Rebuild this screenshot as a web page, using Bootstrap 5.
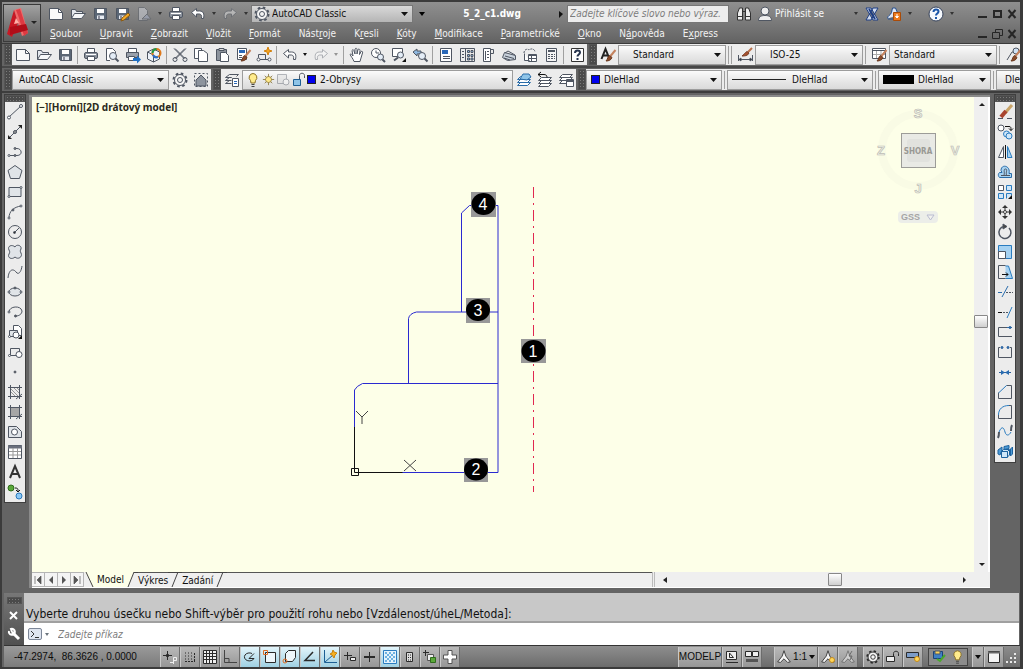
<!DOCTYPE html>
<html lang="cs">
<head>
<meta charset="utf-8">
<meta name="viewport" content="width=device-width, initial-scale=1">
<title>5_2_c1.dwg</title>
<link href="https://cdn.jsdelivr.net/npm/bootstrap@5.3.0/dist/css/bootstrap.min.css" rel="stylesheet">
<style>
:root{--ui:"DejaVu Sans Condensed","DejaVu Sans",sans-serif;--frame:#646464;--strip:#ececec;--paper:#fdffe8}
body{font:10px/14px var(--ui);color:#111;background:var(--frame);border:2px solid #3b3b3b;border-right-width:3px}
button{font:inherit;color:inherit;background:none;border:0;padding:0;flex:none}
select,input{font:inherit;color:inherit;border:0;outline:0;min-width:0}
svg{display:block;flex:none}
.ico{width:20px;height:20px;fill:none;stroke:#4f5662;stroke-width:1}
.slot{width:21px;height:20px;display:flex;align-items:center;justify-content:center}
/* title bar */
.titlebar{height:42px;background:linear-gradient(#8f8f8f,#7a7a7a 50%,#626262);border-bottom:1px solid #3a3a3a;color:#fff;padding-right:1px}
.appbtn{width:38px;height:38px;margin:2px 0 0 1px;background:linear-gradient(#a2a2a2,#7c7c7c 50%,#5c5c5c);border:1px solid #3a3a3a}
.qat{height:22px;margin-top:1px}
.qat .slot{width:22px}
.drop{width:10px;height:20px;display:flex;align-items:center;justify-content:center}
.drop::after{content:"";border:3px solid transparent;border-top:4px solid currentColor;border-bottom:0}
.drop.tiny::after{border-width:3px 2px 0}
.drop.dk{color:#333}
.acct{margin-left:27px}
.linkdrop{margin-right:10px}
.helpdrop{margin-right:17px}
.docname{font-weight:700}
.combo{height:20px;display:flex;align-items:center;background:linear-gradient(#fbfbfb,#e9e9e9 50%,#dadada);border:1px solid #9c9c9c;flex:none;overflow:hidden}
.combo select{appearance:none;flex:1;height:18px;background:url("data:image/svg+xml,%3Csvg xmlns='http://www.w3.org/2000/svg' width='7' height='4'%3E%3Cpath d='M0 0h7L3.500 4z' fill='%23111'/%3E%3C/svg%3E") no-repeat right 4px center;padding:0 12px 0 6px}
.qat .combo{width:162px;height:18px;background:linear-gradient(#d9d9d9,#b5b5b5);color:#111;border-color:#777}
.qat .combo select{height:16px;padding-left:0}
.search{width:162px;height:18px;background:#ededed;border:1px solid #777;padding:0 2px;color:#555;font-style:italic}
.search::placeholder,.cmdinput::placeholder{color:#7c7c7c;opacity:1}
.menurow{gap:18px;padding-left:9px;margin-top:1px;height:18px;line-height:18px}
.menurow a{color:#f2f2f2;text-decoration:none}
.winctl{width:15px;height:18px;display:flex;align-items:center;justify-content:center}
.winctl svg{width:12px;height:12px;stroke:#262626;fill:none;stroke-width:2}
/* docked tool rows */
.toolrow{height:24px;padding-left:2px;border-bottom:2px solid #474747;overflow:hidden}
.toolrow.second{padding-top:1px;height:25px;border-color:#3d3d3d}
.strip{display:flex;align-items:center;background:var(--strip);height:21px;flex:none}
.grip{width:8px;height:21px;flex:none;background:#4a4a4a radial-gradient(#7a7a7a 1px,transparent 1px) 0 0/3px 3px;border:1px solid #555}
.strip+.grip{margin-left:2px}
.grip.h{width:auto;height:7px}
.sep{width:1px;height:18px;background:#a0a0a0;margin:0 2px;flex:none}
.sep+.sep{margin-left:0}
.pale{opacity:.4}
.w-ws{width:157px}.w-layer{width:271px;padding-left:3px}.w-text{width:108px}.w-color{width:136px}.w-ltype{width:146px}.w-lw{width:113px}
.w-text select{padding-left:14px}
.swatch{width:9px;height:9px;background:#00e;border:1px solid #222;flex:none}
/* docked columns */
.work{padding:0 4px 0 2px;min-height:0}
.dock{width:22px;background:var(--strip);border:1px solid #3f3f3f;margin-top:1px}
.dock .slot{width:20px;height:20px}
.view{border-left:3px solid #8a8a8a;border-top:2px solid #8a8a8a;margin:2px 0 0 3px;min-width:0}
.paper{background:var(--paper)}
.vlabel{font:bold 10px/14px "Noto Sans",sans-serif;color:#2a2a20;left:4px;top:3px}
.cube{right:14px;top:10px;width:84px}
.ucsbtn{right:36px;top:114px;width:40px;height:12px;border-radius:4px;background:#eceee9;color:#a5a5a5;font:bold 9px/12px "Liberation Sans",sans-serif}
.vbar{width:16px;background:#efefef;border-right:2px solid #fff}
.thumb{width:14px;height:13px;border:1px solid #888;border-radius:1px;background:linear-gradient(#fff,#cfcfcf);flex:none}
.g205{flex:205}.g231{flex:231}.g158{flex:158}.g117{flex:117}
.tabs{height:16px;background:#efefef;border-bottom:1px solid #fff}
.tabs button{height:15px;line-height:16px}
.pg{width:13px;border:1px solid #b5b5b5;border-left:0;background:#f4f4f4;display:flex;align-items:center;justify-content:center}
.topline{border-top:1px solid #555}
.ltabs{background:var(--paper)}
.hbar{width:338px;padding:0 22px 0 6px;border-left:3px double #bbb}
/* command line */
.cmd{margin:5px 1px 0 2px;height:52px}
.cmdside{width:20px;background:linear-gradient(#777,#505050)}
.cmdlog{height:30px;background:#c8c8c8;border-bottom:2px solid #a0a0a0;font-size:12px;line-height:16px;padding:13px 0 0 2px;color:#111}
.cmdline{height:22px;background:#fff}
.cmdinput{background:none;font-style:italic;height:20px;padding:0 6px}
.prompt{width:14px;height:12px;background:#dfe5ef;border:1px solid #7d8798;border-radius:2px}
/* status bar */
.status{height:22px;border-top:1px solid #333;background:linear-gradient(#8e8e8e,#6c6c6c);margin:0 0 0 2px;font:10px/14px "Liberation Sans",sans-serif;color:#0c0c0c}
.coords{width:156px;height:21px;padding:4px 0 0 10px;background:linear-gradient(#9a9a9a,#7b7b7b)}
.stb{width:20px;height:20px;display:flex;align-items:center;justify-content:center;background:linear-gradient(#b9b9b9,#969696);border-left:1px solid #c9c9c9;border-right:1px solid #6c6c6c}
.stb.on{background:linear-gradient(#e3f5fb,#9fd0e2)}
.stb.thin{width:12px}
.stb .ico{width:18px;height:18px;stroke:#2a2a2a}
.gap5{width:5px;flex:none}
.gap12{width:12px;flex:none}
.tray{width:40px;border:1px solid #444;background:#8c8c8c;height:18px;margin-right:4px}
.tray .ico{width:19px}
</style>
<script src="https://cdn.jsdelivr.net/npm/bootstrap@5.3.0/dist/js/bootstrap.bundle.min.js"></script>
</head>
<body class="vh-100 d-flex flex-column overflow-hidden m-0">

<svg width="0" height="0" class="position-absolute" aria-hidden="true">
  <symbol id="new" viewBox="0 0 20 20"><path d="M3.500 4.500h9l4 4v7h-13z" fill="#fafafa"/><path d="M12.500 4.500v4h4"/></symbol>
  <symbol id="open" viewBox="0 0 20 20"><path d="M3.500 14.500v-9h4l1 2h6v2" fill="#e4e8ee"/><path d="M3.500 14.500l3-5h11l-4 5z" fill="#f6f8fa"/></symbol>
  <symbol id="save" viewBox="0 0 20 20"><path d="M4.500 4.500h12v11h-11l-1-1z" fill="#5b6776"/><path d="M7 5h7v4H7z" fill="#fff" stroke="none"/><path d="M7 11.500h7V15H7z" fill="#e6ebf2" stroke="none"/><path d="M9 12v3" stroke="#334"/></symbol>
  <symbol id="print" viewBox="0 0 20 20"><path d="M6.500 8v-4.500h7V8" fill="#fff"/><rect x="3.500" y="7.500" width="13" height="6" rx="1.500" fill="#8d949e"/><path d="M6.500 11.500h7v4h-7z" fill="#fff"/><path d="M5 9.500h10" stroke="#fff"/></symbol>
  <symbol id="undo" viewBox="0 0 20 20"><path d="M3.500 8.500l5-4v2.500h3c4 0 5 3 4 7.500h-2c.5-3-.5-4.500-2-4.500h-3v3z" fill="#fff"/></symbol>
  <symbol id="redo" viewBox="0 0 20 20"><path d="M16.500 8.500l-5-4v2.500h-3c-4 0-5 3-4 7.500h2c-.5-3 .5-4.500 2-4.500h3v3z" fill="#fff"/></symbol>
  <symbol id="gear" viewBox="0 0 20 20"><circle cx="10" cy="10" r="6.500" stroke-width="2" stroke-dasharray="2.600 2.500"/><circle cx="10" cy="10" r="5.500" fill="#f4f4f4"/><circle cx="10" cy="10" r="2.500"/></symbol>
  <symbol id="brush" viewBox="0 0 20 20"><path d="M17.500 5l-5 6" stroke="#c4825e" stroke-width="2"/><path d="M8 16c2 0 5-.5 6-3.500l-2.500-2c-2 1-1.500 3.500-3.500 5.500z" fill="#8a4a2a" stroke="#6a3a20"/></symbol>
  <symbol id="layers" viewBox="0 0 20 20"><path d="M3.500 15.500l3-3h10l-3 3zM3.500 12.500l3-3h10l-3 3zM3.500 9.500l3-3h10l-3 3z" fill="#fff"/></symbol>
  <symbol id="sun" viewBox="0 0 20 20"><path d="M10 2.500v15M2.500 10h15M5 5l10 10M15 5L5 15" stroke="#7d6a2e"/><circle cx="10" cy="10" r="4" fill="#ffe98a" stroke="#8a7430"/></symbol>
  <symbol id="bulb" viewBox="0 0 20 20"><path d="M10 3.500a4 4 0 0 1 2.500 7l-.5 2.500h-4l-.5-2.500a4 4 0 0 1 2.500-7z" fill="#ffec8c" stroke="#8d7226"/><path d="M8.500 14.500h3M8.500 16.500h3" stroke="#444"/></symbol>
  <symbol id="scale" viewBox="0 0 20 20"><path d="M10 3l2 6 5 6.500-3 .5-4-4-4 4-3-.5L8 9z" fill="#f5f5f5" stroke="#333"/></symbol>
  <symbol id="wclose" viewBox="0 0 12 12"><path d="M2.500 2l7 8M9.500 2l-7 8"/></symbol>
  <symbol id="wmin" viewBox="0 0 12 12"><path d="M2 9h9"/></symbol>
</svg>

<header class="titlebar d-flex flex-shrink-0">
  <button class="appbtn d-flex align-items-center" aria-label="AutoCAD">
    <svg width="36" height="36" viewBox="0 0 36 36"><path d="M10 5l7-2 7 25-6 3z" fill="#f26a6a"/><path d="M10 5L3 29l5 3 6-14z" fill="#c81824"/><path d="M12 5l3 8 5 18 4-3-8-24z" fill="#dd3a42"/><path d="M6 22l16-3 2 6-18 5z" fill="#b00d18"/><path d="M12 13l-2 6 5-1z" fill="#ffb0a8"/><path d="M27 16h6l-3 3z" fill="#222"/></svg>
  </button>
  <div class="flex-grow-1 d-flex flex-column">
    <div class="qat d-flex align-items-center ps-1">
      <button class="slot" aria-label="Nový"><svg class="ico"><use href="#new"/></svg></button>
      <button class="slot" aria-label="Otevřít"><svg class="ico"><use href="#open"/></svg></button>
      <button class="slot" aria-label="Uložit"><svg class="ico"><use href="#save"/></svg></button>
      <button class="slot" aria-label="Uložit jako"><svg class="ico"><use href="#save"/><path d="M9 17l1-3 6-5 2 2-6 5z" fill="#f4a824" stroke="#8a5a12"/></svg></button>
      <button class="slot pale" aria-label="Přenést"><svg class="ico"><path d="M4.500 3.500h6l3 3v10h-9z" fill="#e8ecf6"/><path d="M8 15l5-5 4 5z" fill="#b9c6e6"/></svg></button>
      <button class="drop dk tiny" aria-label="Další"></button>
      <button class="slot" aria-label="Tisk"><svg class="ico"><use href="#print"/></svg></button>
      <button class="slot" aria-label="Zpět"><svg class="ico"><use href="#undo"/></svg></button>
      <button class="drop dk tiny" aria-label="Historie zpět"></button>
      <button class="slot pale" aria-label="Znovu"><svg class="ico"><use href="#redo"/></svg></button>
      <button class="drop dk tiny" aria-label="Historie znovu"></button>
      <label class="combo"><svg class="ico"><use href="#gear"/></svg><select aria-label="Pracovní prostor"><option>AutoCAD Classic</option></select></label>
      <button class="drop text-black mx-1" aria-label="Přizpůsobit panel"></button>
      <div class="docname flex-grow-1 text-center">5_2_c1.dwg</div>
      <svg width="14" height="10" viewBox="0 0 14 10"><path d="M6 2l4 3-4 4z" fill="#111"/></svg>
      <input class="search flex-shrink-0" type="text" placeholder="Zadejte klíčové slovo nebo výraz." aria-label="Hledat">
      <button class="slot ms-1" aria-label="Najít"><svg class="ico"><path d="M3.500 9l2-5h3v12h-5zM11.500 4h3l2 5v7h-5z" fill="#eee" stroke="#333"/><path d="M8.500 7.500h3M4 12.500h4M12 12.500h4" stroke="#333"/></svg></button>
      <button class="d-flex align-items-center text-light"><svg class="ico"><circle cx="10" cy="7" r="4" fill="#eee"/><path d="M3.500 16.500c0-4 3-5 6.500-5s6.500 1 6.500 5z" fill="#eee"/></svg>Přihlásit se</button>
      <button class="drop dk tiny acct" aria-label="Účet"></button>
      <button class="slot" aria-label="Exchange"><svg class="ico"><path d="M4 4h5l7 12h-5zM16 4h-5L4 16h5z" fill="#cfd9ec" stroke="#1f3f85"/><path d="M7 5l6 10" stroke="#1f3f85" stroke-width="2"/></svg></button>
      <button class="slot" aria-label="Propojit"><svg class="ico"><path d="M3.500 14.500c0-3 3-3 4-6l1-4.500h3l3 7M4 15h6" fill="#dce6f6" stroke="#28508e"/><path d="M9.500 8.500h7v8h-7z" fill="#ee7a1c" stroke="#a94b08"/><path d="M13 10v3M11.500 12.500h3L13 14z" stroke="#fff" fill="#fff"/></svg></button>
      <button class="drop dk tiny linkdrop" aria-label="Nabídka propojení"></button>
      <button class="slot" aria-label="Nápověda"><svg class="ico"><circle cx="10" cy="10" r="7" fill="#f5f8fc" stroke="#37435b"/><path d="M7.500 8c0-3.500 5-3 5-.5 0 2-2.500 2-2.500 4M10 13v2" stroke="#1c56a8" stroke-width="2"/></svg></button>
      <button class="drop dk tiny helpdrop" aria-label="Nabídka nápovědy"></button>
      <button class="winctl" aria-label="Minimalizovat"><svg><use href="#wmin"/></svg></button>
      <button class="winctl" aria-label="Maximalizovat"><svg><path d="M3 3h7v6H3z"/></svg></button>
      <button class="winctl" aria-label="Zavřít"><svg><use href="#wclose"/></svg></button>
    </div>
    <nav class="menurow d-flex align-items-center">
      <a href="#"><u>S</u>oubor</a><a href="#"><u>U</u>pravit</a><a href="#"><u>Z</u>obrazit</a><a href="#"><u>V</u>ložit</a><a href="#"><u>F</u>ormát</a><a href="#">Nást<u>r</u>oje</a><a href="#">K<u>r</u>esli</a><a href="#"><u>K</u>óty</a><a href="#"><u>M</u>odifikace</a><a href="#"><u>P</u>arametrické</a><a href="#"><u>O</u>kno</a><a href="#">N<u>á</u>pověda</a><a href="#">E<u>x</u>press</a>
      <div class="d-flex ms-auto">
        <button class="winctl" aria-label="Minimalizovat výkres"><svg><use href="#wmin"/></svg></button>
        <button class="winctl" aria-label="Obnovit výkres"><svg><path d="M4.500 4V1.500h7v6H9M1.500 4.500h7v6h-7z" stroke-width="1"/></svg></button>
        <button class="winctl" aria-label="Zavřít výkres"><svg><use href="#wclose"/></svg></button>
      </div>
    </nav>
  </div>
</header>

<div class="toolrow d-flex flex-shrink-0">
  <div class="grip"></div>
  <div class="strip">
    <button class="slot" aria-label="Nový"><svg class="ico"><use href="#new"/></svg></button>
    <button class="slot" aria-label="Otevřít"><svg class="ico"><use href="#open"/></svg></button>
    <button class="slot" aria-label="Uložit"><svg class="ico"><use href="#save"/></svg></button>
    <span class="sep"></span>
    <button class="slot" aria-label="Tisk"><svg class="ico"><use href="#print"/></svg></button>
    <button class="slot" aria-label="Náhled"><svg class="ico"><path d="M8 15.500H4.500v-12h6l3 3V8" fill="#fff"/><circle cx="11" cy="11" r="3.500" fill="#e4edf7"/><path d="M13.500 13.500l3 3" stroke-width="2"/></svg></button>
    <button class="slot" aria-label="Publikovat"><svg class="ico"><path d="M5.500 7.500v-4h8v4" fill="#fff"/><path d="M3.500 7.500h12v5h-12z" fill="#9aa1ab"/><path d="M5.500 11.500h6v4h-6z" fill="#fff"/><path d="M10 13h4v-2.500l4 4-4 4V16h-4z" fill="#1f6fc4" stroke="none"/></svg></button>
    <button class="slot" aria-label="3DDWF"><svg class="ico"><path d="M3.500 7l6-3 6 3v7l-6 3-6-3z" fill="#eef3fa"/><path d="M3.500 7l6 3v7"/><circle cx="12.500" cy="8" r="4" stroke="#e07a1c" stroke-width="2"/><path d="M12.500 4a4 4 0 0 0-4 4" stroke="#1f9a4a" stroke-width="2"/><path d="M9 10a4 4 0 0 0 5 2" stroke="#2a6fd0" stroke-width="2"/></svg></button>
    <span class="sep"></span>
    <button class="slot" aria-label="Vyjmout"><svg class="ico"><path d="M4 3.500l10 10M16 3.500l-10 10M5 3.500l10 10M15 3.500l-10 10"/><circle cx="5" cy="14.500" r="2"/><circle cx="15" cy="14.500" r="2"/></svg></button>
    <button class="slot" aria-label="Kopírovat"><svg class="ico"><path d="M3.500 3.500h7v10h-7z" fill="#fff"/><path d="M7.500 5.500h5l4 3v8h-9z" fill="#fff"/></svg></button>
    <button class="slot" aria-label="Vložit"><svg class="ico"><path d="M4.500 4.500h10v11h-10z" fill="#8c939c"/><path d="M7 3.500h5v2H7z" fill="#ddd"/><path d="M8.500 7.500h5l3 3v6h-8z" fill="#fff"/></svg></button>
    <button class="slot" aria-label="Kopírovat vlastnosti"><svg class="ico"><path d="M4.500 3.500h9v11h-9z" fill="#fff"/><path d="M6 5h6v3H6z" fill="#2a68b8" stroke="none"/><path d="M6 10.500h3M6 12.500h3"/><use href="#brush"/></svg></button>
    <button class="slot" aria-label="Editor bloků"><svg class="ico"><path d="M4.500 12.500v-3h7v5h-7zM3 14.500h3M11 14.500h4"/><circle cx="4.500" cy="14.500" r="1.500" fill="#fff"/><circle cx="15.500" cy="14.500" r="1.500" fill="#fff"/><path d="M14 2l1 3 3 1-3 1-1 3-1-3-3-1 3-1z" fill="#f5a520" stroke="#d4830e"/></svg></button>
    <span class="sep"></span>
    <button class="slot" aria-label="Zpět"><svg class="ico"><use href="#undo"/></svg></button>
    <button class="drop tiny" aria-label="Historie zpět"></button>
    <button class="slot pale" aria-label="Znovu"><svg class="ico"><use href="#redo"/></svg></button>
    <button class="drop tiny pale" aria-label="Historie znovu"></button>
    <span class="sep"></span>
    <button class="slot" aria-label="Posun"><svg class="ico"><path d="M7 16.500c-1-3-3-5-4-7 1-1 2 0 3 1.500L5 5.500c1-1.500 2-.5 2 .5l1 3v-5c1-1.500 2-.5 2 .5V9l1-4.500c1-1 2 0 2 1l-.5 4 1.500-3c1-.5 2 0 1.500 1.500L14 13l-1 3.500z" fill="#fff"/></svg></button>
    <button class="slot" aria-label="Zoom dynamický"><svg class="ico"><circle cx="8" cy="8" r="4.500" fill="#fff"/><path d="M8 5.500V8h3"/><circle cx="12.500" cy="12" r="3" fill="#e4edf7"/><path d="M14.500 14.500l2.500 2.500" stroke-width="2"/></svg></button>
    <button class="slot" aria-label="Zoom okno"><svg class="ico"><path d="M3.500 3.500h10v8h-10z" fill="#fff"/><circle cx="11.500" cy="10" r="3" fill="#e4edf7"/><path d="M9 12.500l-4 3" stroke-width="2"/><path d="M17 13v4h-4z" fill="#111" stroke="none"/></svg></button>
    <button class="slot" aria-label="Zoom předchozí"><svg class="ico"><path d="M3 7l4-3v2h4v3H7v2z" fill="#8fb8e0"/><circle cx="12" cy="11" r="3.500" fill="#e4edf7"/><path d="M14.500 13.500l3 3" stroke-width="2"/></svg></button>
    <span class="sep"></span>
    <button class="slot" aria-label="Vlastnosti"><svg class="ico"><path d="M4.500 3.500h11v13h-11z" fill="#fff"/><path d="M6 5h6v4H6z" fill="#2a68b8" stroke="none"/><path d="M7 11.500h7M7 13.500h7"/></svg></button>
    <button class="slot" aria-label="DesignCenter"><svg class="ico"><path d="M3.500 3.500h14v13h-14zM8.500 4v12"/><path d="M5 6.500h2M5 9.500h2M5 12.500h2"/><path d="M10.500 5.500h2v2h-2zM14 5.500h2v2h-2zM10.500 9.500h2v2h-2zM14 9.500h2v2h-2zM10.500 13h2v2h-2zM14 13h2v2h-2z" fill="#8fb8e0"/></svg></button>
    <button class="slot" aria-label="Palety nástrojů"><svg class="ico"><path d="M5.500 3.500h7v13h-7z" fill="#fff"/><path d="M12.500 4.500h3v4h-3M7.500 6v9"/><path d="M9 6.500h2M9 9.500h2M9 12.500h2"/></svg></button>
    <button class="slot" aria-label="Sady listů"><svg class="ico"><path d="M3.500 12.500l2-5 11 3v4l-8 1z" fill="#c9d2dc"/><path d="M6 8l3-2 7 4M6 11l9 2.500M5 13l6 2"/></svg></button>
    <button class="slot" aria-label="Značky"><svg class="ico"><path d="M4 8c0-3 3-5 5-3 2-2 6-1 6 2" stroke-dasharray="2 1"/><path d="M4.500 8.500v7h5M8.500 9.500h8v7h-8z" fill="#fff"/><path d="M9 10.500h7M11.500 11v5M9 13.500h7"/></svg></button>
    <button class="slot" aria-label="Kalkulačka"><svg class="ico"><path d="M5.500 3.500h10v13h-10z" fill="#f5f5f5"/><path d="M7 6h7" stroke-width="2"/><path d="M7 9.500h7M7 11.500h7M7 13.500h7" stroke-dasharray="2 1"/></svg></button>
    <span class="sep"></span>
    <button class="slot" aria-label="Nápověda"><svg class="ico"><path d="M4.500 3.500h12v13h-12z" fill="#fff" stroke="#333"/><path d="M8 8c0-3.500 5-3 5-.5 0 2-2.500 2-2.500 4M10.500 13v2" stroke="#27344e" stroke-width="2"/></svg></button>
  </div>
  <div class="grip"></div>
  <div class="strip flex-grow-1">
    <button class="slot" aria-label="Styl textu"><svg class="ico"><path d="M3.500 14l4-10 4 10M5 10.500h5" stroke="#222" stroke-width="2"/><use href="#brush"/></svg></button>
    <div class="combo w-text"><select aria-label="Styl textu"><option>Standard</option></select></div>
    <span class="sep"></span><span class="sep"></span>
    <button class="slot" aria-label="Kótovací styl"><svg class="ico"><path d="M3.500 10v6M17.500 10v6M4 14.500h13"/><path d="M6 13v3l-2-1.500zM15 13v3l2-1.500z" fill="#222"/><path d="M17 3l-4 4" stroke="#b9714c" stroke-width="2"/><path d="M7 11c2 0 6 0 7-3l-2-1.500c-2 1-3 3-5 4.500z" fill="#a8502e" stroke="#7a4028"/></svg></button>
    <div class="combo w-text"><select aria-label="Kótovací styl"><option>ISO-25</option></select></div>
    <span class="sep"></span>
    <button class="slot" aria-label="Styl tabulky"><svg class="ico"><path d="M3.500 3.500h13v10h-13z" fill="#fff"/><path d="M3.500 5.500h13"/><path d="M7.500 6v7M12 6v7M4 9.500h12" stroke="#aaa"/><use href="#brush"/></svg></button>
    <div class="combo w-text"><select class="ps-1" aria-label="Styl tabulky"><option>Standard</option></select></div>
    <span class="sep"></span>
    <button class="slot" aria-label="Styl odkazu"><svg class="ico"><path d="M4 15l5-8h3"/><circle cx="13" cy="6" r="3" fill="#cfe2f5"/><use href="#brush"/></svg></button>
  </div>
</div>

<div class="toolrow second d-flex flex-shrink-0">
  <div class="grip"></div>
  <div class="strip">
    <div class="combo w-ws"><select aria-label="Pracovní prostor"><option>AutoCAD Classic</option></select></div>
    <button class="slot" aria-label="Nastavení prostoru"><svg class="ico"><use href="#gear"/></svg></button>
    <button class="slot" aria-label="Můj prostor"><svg class="ico"><path d="M3.500 3.500h13v13h-13z" stroke-dasharray="2 2"/><path d="M5 10l5-5 5 5v6H5z" fill="#8d949e"/></svg></button>
  </div>
  <div class="grip"></div>
  <div class="strip">
    <button class="slot" aria-label="Správce vrstev"><svg class="ico"><path d="M3.500 7.500l4-3h9l-2 2M3.500 10.500l4-3h2M3.500 13.500l4-3M3.500 7.500h6M3.500 10.500h6M3.500 13.500h6"/><path d="M10.500 8.500h6v8h-6z" fill="#fff"/><path d="M12 11.500h3M12 13.500h3" stroke="#2a68b8"/></svg></button>
    <label class="combo w-layer">
      <svg class="ico" style="width:15px"><use href="#bulb" x="-3" width="20" height="20"/></svg>
      <svg class="ico" style="width:15px"><g transform="translate(0 2) scale(.75)"><use href="#sun" width="20" height="20"/></g></svg>
      <svg class="ico pale" style="width:15px"><path d="M1.500 4.500h9v9h-9z" fill="#ddd"/><circle cx="10" cy="12" r="3" fill="#fff"/></svg>
      <svg class="ico" style="width:16px"><path d="M2.500 9.500h7v6h-7z" fill="#8ec4e8" stroke="#1d5f94"/><path d="M8.500 9V5.500c0-3 5-3 5 0V8"/></svg>
      <span class="swatch"></span><select class="ps-1" aria-label="Vrstva"><option>2-Obrysy</option></select>
    </label>
    <button class="slot" aria-label="Vrstva objektu aktuální"><svg class="ico"><g stroke="#2a6ca8"><use href="#layers"/><path d="M6 9l3-5h6l2 3-4 3z" fill="#8ec4e8"/></g></svg></button>
    <button class="slot" aria-label="Předchozí vrstva"><svg class="ico"><use href="#layers" y="1"/><path d="M3 4.500h6c2 0 3 1 3 3M6 2L3 4.500 6 7" stroke="#111"/></svg></button>
    <button class="slot" aria-label="Stavy vrstev"><svg class="ico"><use href="#layers" y="-2"/><path d="M10.500 9.500h7v7h-7z" fill="#fff"/><path d="M11 11h6" stroke-width="2"/></svg></button>
  </div>
  <div class="grip"></div>
  <div class="strip flex-grow-1">
    <label class="combo w-color ps-1"><span class="swatch"></span><select class="ps-1" aria-label="Barva"><option>DleHlad</option></select></label>
    <span class="sep"></span>
    <label class="combo w-ltype ps-1"><svg width="54" height="2"><path d="M0 0h54v1H0z" fill="#222"/></svg><select aria-label="Typ čáry"><option>DleHlad</option></select></label>
    <span class="sep"></span>
    <label class="combo w-lw ps-1"><svg width="31" height="9"><path d="M0 0h31v9H0z"/></svg><select class="ps-1" aria-label="Tloušťka čáry"><option>DleHlad</option></select></label>
    <span class="sep"></span>
    <div class="combo w-text"><select class="ps-2" aria-label="Styl vykreslení"><option>DleBarvy</option></select></div>
  </div>
</div>

<main class="work d-flex flex-grow-1 overflow-hidden">
  <div class="dock align-self-start flex-shrink-0">
    <div class="grip h"></div>
    <button class="slot" aria-label="Úsečka"><svg class="ico"><path d="M4 15L16 4"/><circle cx="4" cy="15.500" r="1.500" fill="#fff"/><circle cx="16" cy="4" r="1.500" fill="#fff"/></svg></button>
    <button class="slot" aria-label="Přímka"><svg class="ico"><path d="M4 16L16 4"/><path d="M3 17v-4l4 4zM17 3v4l-4-4z" fill="#222" stroke="none"/><circle cx="10" cy="10" r="1.500" fill="#999"/></svg></button>
    <button class="slot" aria-label="Křivka"><svg class="ico"><path d="M4 13.500h8c6 0 5-7 0-7h-2"/><circle cx="4" cy="13.500" r="1" fill="#fff"/><circle cx="10" cy="13.500" r="1" fill="#888"/><circle cx="10" cy="6.500" r="1" fill="#888"/></svg></button>
    <button class="slot" aria-label="Polygon"><svg class="ico"><path d="M10 3.500l7 5-2.500 8h-9L3 8.500z" fill="#e0e4e8"/></svg></button>
    <button class="slot" aria-label="Obdélník"><svg class="ico"><path d="M4 5.500h12v9H4z" fill="#e0e4e8"/><circle cx="4" cy="14.500" r="1" fill="#fff"/><circle cx="16" cy="5.500" r="1" fill="#fff"/></svg></button>
    <button class="slot" aria-label="Oblouk"><svg class="ico"><path d="M4 16c0-7 5-11 12-12"/><circle cx="4" cy="16" r="1" fill="#fff"/><circle cx="8" cy="8" r="1" fill="#777"/><circle cx="16" cy="4" r="1" fill="#fff"/></svg></button>
    <button class="slot" aria-label="Kružnice"><svg class="ico"><circle cx="10" cy="10" r="6.500"/><path d="M10 10l4-4"/><circle cx="9.500" cy="10.500" r="1" fill="#333"/></svg></button>
    <button class="slot" aria-label="Revizní obláček"><svg class="ico"><path d="M10 5c1-3 7-2 6 2-1 2-1 2 0 4 2 4-3 7-6 4-3 3-8 1-6-3 1-2 1-2 0-4-2-4 3-6 6-3z" fill="#e0e4e8"/></svg></button>
    <button class="slot" aria-label="Spline"><svg class="ico"><path d="M3 16c1-10 6-9 8-6s5 1 6-6"/></svg></button>
    <button class="slot" aria-label="Elipsa"><svg class="ico"><ellipse cx="10" cy="10" rx="6" ry="4" fill="#e0e4e8"/><circle cx="10" cy="6" r="1" fill="#777"/><circle cx="4" cy="10" r="1" fill="#fff"/><circle cx="16" cy="10" r="1" fill="#fff"/></svg></button>
    <button class="slot" aria-label="Eliptický oblouk"><svg class="ico"><path d="M4 10c0-6 12-7 13-1 0 3-3 5-6 5"/><circle cx="4" cy="10" r="1" fill="#fff"/><circle cx="10.500" cy="14" r="1" fill="#555"/></svg></button>
    <button class="slot" aria-label="Vložit blok"><svg class="ico"><path d="M8.500 8V3.500h5l3 3v7H12" fill="#fff"/><path d="M4.500 14.500v-6h8v6z" fill="#e0e4e8"/><circle cx="11" cy="13" r="3" fill="#fff"/><circle cx="4.500" cy="14.500" r="1" fill="#fff"/><path d="M17 13v4h-4z" fill="#111" stroke="none"/></svg></button>
    <button class="slot" aria-label="Vytvořit blok"><svg class="ico"><path d="M5.500 13V6.500h9V11M6 13.500h5"/><circle cx="14" cy="12.500" r="3" fill="#fff"/><circle cx="4.500" cy="13.500" r="1" fill="#fff"/></svg></button>
    <button class="slot" aria-label="Bod"><svg class="ico"><circle cx="10" cy="10" r="1" fill="#666"/></svg></button>
    <button class="slot" aria-label="Šrafy"><svg class="ico"><path d="M6 7l7 7M6 10l4 4M9 6l5 5M12 6l2 2" stroke="#999"/><path d="M3 5.500h14M3 14.500h14M5.500 3v14M14.500 3v14M11 17l6-5"/></svg></button>
    <button class="slot" aria-label="Gradient"><svg class="ico"><path d="M6 6h8v8H6z" fill="#a6a6a6" stroke="none"/><path d="M3 5.500h14M3 14.500h14M5.500 3v14M14.500 3v14M11 17l6-5"/></svg></button>
    <button class="slot" aria-label="Oblast"><svg class="ico"><path d="M3.500 4.500h8l5 5v6h-13z" fill="#e0e4e8"/><circle cx="9.500" cy="10" r="3" fill="#fff"/></svg></button>
    <button class="slot" aria-label="Tabulka"><svg class="ico"><path d="M3.500 3.500h13v13h-13z" fill="#fff"/><path d="M3 5h14" stroke-width="3" stroke="#6a6f7c"/><path d="M8 6v10M12.500 6v10M4 9.500h12M4 13h12" stroke="#999"/></svg></button>
    <button class="slot" aria-label="Text"><svg class="ico"><path d="M5 16L10 4l5 12M7 12h6" stroke="#333" stroke-width="2"/></svg></button>
    <button class="slot" aria-label="Přidat vybrané"><svg class="ico"><circle cx="6" cy="6" r="3" fill="#5aa83a" stroke="#2f6b1c"/><circle cx="14" cy="14" r="3" fill="#8cc8f4" stroke="#2a78bc"/><path d="M10 6c3 0 3 1 3 3M11 8l2 2 2-2" stroke="#111"/></svg></button>
  </div>

  <div class="view d-flex flex-column flex-grow-1">
    <div class="d-flex flex-grow-1" style="min-height:0">
      <div class="paper position-relative flex-grow-1 overflow-hidden">
        <svg width="100%" height="100%" class="position-absolute top-0 start-0" fill="none" font-family="Liberation Sans, sans-serif">
          <g transform="translate(-32 -97)">
            <path d="M354.500 427.500v-37.500q2-4 8-6.500h135.500M408.500 383.500v-65q1-5 8-6.500h81.500M461.500 312v-99l8-7.500h28.500v267h-96" stroke="#2a2ad0"/>
            <path d="M354.500 427v45.500h48M351.500 468.500h7v7h-7z" stroke="#111"/>
            <path d="M356 411l6 6v7M368 411l-6 6M404 460l12 11M416 460l-12 11" stroke="#444"/>
            <path d="M533.500 187v305" stroke="#e02850" stroke-dasharray="11 5 2 5"/>
            <path d="M471 192h25v25h-25zM466 298h24v25h-24zM521 339h25v24h-25zM464 458h24v24h-24z" fill="#989898"/>
            <g fill="#000"><ellipse cx="483.500" cy="204" rx="12" ry="11"/><ellipse cx="478" cy="310" rx="12" ry="11"/><ellipse cx="533.500" cy="351" rx="12" ry="11"/><ellipse cx="476" cy="469.500" rx="12" ry="11"/></g>
            <g fill="#fff" font-size="16" text-anchor="middle"><text x="483" y="210">4</text><text x="478" y="316">3</text><text x="533" y="357">1</text><text x="476" y="475">2</text></g>
          </g>
        </svg>
        <div class="vlabel position-absolute">[−][Horní][2D drátový model]</div>
        <svg class="cube position-absolute" height="96" viewBox="0 0 84 96" font-family="Liberation Sans, sans-serif">
          <circle cx="42" cy="43" r="36" fill="none" stroke="#f9fbe5" stroke-width="8"/>
          <rect x="25.500" y="26.500" width="34" height="34" fill="#e9eae5" stroke="#9c9c98"/>
          <rect x="31" y="32" width="23" height="23" rx="3" fill="#e1e2de"/>
          <g font-size="13" font-weight="700" fill="#f0f1e4" stroke="#bdbdb6" stroke-width=".7" text-anchor="middle"><text x="42" y="11">S</text><text x="5" y="48">Z</text><text x="79" y="48">V</text><text x="42" y="86">J</text></g>
          <text x="42" y="47" font-size="8" font-weight="700" fill="#999994" text-anchor="middle" font-family="DejaVu Sans Condensed, sans-serif">SHORA</text>
        </svg>
        <button class="ucsbtn position-absolute d-flex align-items-center justify-content-around">GSS<svg width="9" height="7"><path d="M1 1h7L4.500 6z" fill="#f2f2ee" stroke="#b9bcd0"/></svg></button>
      </div>
      <div class="vbar d-flex flex-column align-items-center py-1 flex-shrink-0">
        <svg width="7" height="6"><path d="M1 5l3-3 3 3z" fill="#222"/></svg><div class="g205"></div><div class="thumb"></div><div class="g231"></div><svg width="7" height="6"><path d="M1 1l3 3 3-3z" fill="#222"/></svg>
      </div>
    </div>
    <div class="tabs d-flex flex-shrink-0">
      <div class="ltabs d-flex">
        <button class="pg" aria-label="První"><svg width="8" height="8"><path d="M1 0v8M7 0v8L3 4z" stroke="#555" fill="#555" stroke-width=".7"/></svg></button>
        <button class="pg" aria-label="Předchozí"><svg width="8" height="8"><path d="M6 0v8L2 4z" fill="#555"/></svg></button>
        <button class="pg" aria-label="Další"><svg width="8" height="8"><path d="M2 0v8l4-4z" fill="#555"/></svg></button>
        <button class="pg" aria-label="Poslední"><svg width="8" height="8"><path d="M7 0v8M1 0v8l4-4z" stroke="#555" fill="#555" stroke-width=".7"/></svg></button>
        <svg width="13" height="15"><path d="M1 0l8 15H0V0z" fill="#efefef"/><path d="M2 0l7 15" stroke="#444"/></svg>
        <button>Model</button>
        <svg width="14" height="15"><path d="M10 0L4 15h10V0z" fill="#efefef"/><path d="M10 0L4 15M10 .5h4" stroke="#444"/></svg>
      </div>
      <button class="topline">Výkres</button>
      <svg width="14" height="15"><path d="M10 0L4 15M0 .5h14" stroke="#444"/></svg>
      <button class="topline">Zadání</button>
      <svg width="14" height="15"><path d="M10 0L4 15M0 .5h14" stroke="#444"/></svg>
      <div class="topline flex-grow-1"></div>
      <div class="hbar d-flex align-items-center flex-shrink-0">
        <svg width="8" height="8"><path d="M6 1v6L2 4z" fill="#222"/></svg><div class="g158"></div><div class="thumb"></div><div class="g117"></div><svg width="8" height="8"><path d="M3 1v6l3-3z" fill="#222"/></svg>
      </div>
    </div>
  </div>

  <div class="dock align-self-start flex-shrink-0 ms-1">
    <div class="grip h"></div>
    <button class="slot" aria-label="Vymazat"><svg class="ico"><path d="M3 16.500h5M12 16.500h5"/><path d="M17 3l-7 8" stroke="#c9a468" stroke-width="3"/><path d="M11 9l-5 6" stroke="#a8442f" stroke-width="4"/></svg></button>
    <button class="slot" aria-label="Kopírovat"><svg class="ico"><circle cx="6" cy="6" r="3" fill="#fff"/><path d="M10 4.500h4c2 0 2 1 2 4M14 6.500l2 2 2-2" stroke="#111"/><circle cx="11.500" cy="12" r="3" fill="#cfe6f8" stroke="#2a7cc0"/><circle cx="14" cy="14" r="3" fill="#cfe6f8" stroke="#2a7cc0"/></svg></button>
    <button class="slot" aria-label="Zrcadlit"><svg class="ico"><path d="M8.500 4.500v11h-5z" fill="#fff"/><path d="M10.500 3v14" stroke="#111"/><path d="M12.500 4.500v11h4.500z" fill="#a6d2f2" stroke="#2a7cc0"/></svg></button>
    <button class="slot" aria-label="Ekvidistanta"><svg class="ico"><path d="M4.500 15.500h12v-4H14c2-8-8-10-8-3l1 2H4.500c-2 2-1 4 0 5z" fill="#a6d2f2" stroke="#2a6ca8"/><path d="M6 13.500h9M9 13c1-2-1-6 1.500-6s0 4 1 6"/></svg></button>
    <button class="slot" aria-label="Pole"><svg class="ico"><path d="M3.500 3.500h5v5h-5z" fill="#fff"/><path d="M11.500 3.500h5v5h-5zM3.500 11.500h5v5h-5zM11.500 16.500v-5h5v2" fill="#cfe6f8" stroke="#2a7cc0"/><path d="M17 13v4h-4z" fill="#111" stroke="none"/></svg></button>
    <button class="slot" aria-label="Posunout"><svg class="ico"><path d="M10 3l3 3H7zM10 17l3-3H7zM3 10l3-3v6zM17 10l-3-3v6z" fill="#333" stroke="none"/><path d="M10 5v3M10 12v3M5 10h3M12 10h3" stroke="#333"/><circle cx="10" cy="10" r="1.500" stroke="#333" fill="#fff"/></svg></button>
    <button class="slot" aria-label="Otočit"><svg class="ico"><path d="M9 4.500a6 6 0 1 0 5 1.500" stroke-width="1.500"/><path d="M8 2l4 2.500L8 7z" fill="#444"/></svg></button>
    <button class="slot" aria-label="Měřítko"><svg class="ico"><path d="M3.500 3.500h13v13h-13z" fill="#a6d2f2" stroke="#2a7cc0"/><path d="M3.500 9.500h7v7h-7z" fill="#fff"/></svg></button>
    <button class="slot" aria-label="Protáhnout"><svg class="ico"><path d="M10.500 4h3l4 12.500h-7" fill="#a6d2f2" stroke="#2a7cc0"/><path d="M10.500 3.500h-7v13h7"/><path d="M7 12.500h6M11 10.500l2 2-2 2" stroke="#111"/></svg></button>
    <button class="slot" aria-label="Oříznout"><svg class="ico"><path d="M3 10.500h4M7 15l6-11" stroke="#2a6cac"/><path d="M11 10.500h7" stroke-dasharray="2 1"/></svg></button>
    <button class="slot" aria-label="Prodloužit"><svg class="ico"><path d="M3 10.500h4" stroke="#111"/><path d="M8 10.500h5" stroke-dasharray="2 1"/><path d="M12 16l5-11" stroke="#2a7cc0"/></svg></button>
    <button class="slot" aria-label="Přerušit v bodě"><svg class="ico"><path d="M13 5.500H3.500v9H17"/><path d="M12 5.500h5" stroke="#2a6cac"/><circle cx="15" cy="5.500" r="1" fill="#2a7cc0" stroke="#2a5c98"/></svg></button>
    <button class="slot" aria-label="Přerušit"><svg class="ico"><path d="M5 5.500H3.500v10h13v-10H15"/><circle cx="7" cy="5.500" r="1" fill="#2a7cc0" stroke="#2a5c98"/><circle cx="13" cy="5.500" r="1" fill="#2a7cc0" stroke="#2a5c98"/></svg></button>
    <button class="slot" aria-label="Spojit"><svg class="ico"><path d="M4 10.500h12" stroke="#2a5c98"/><path d="M6 8v5l4-2.500zM14 8v5l-4-2.500z" fill="#2a6cb0" stroke="none"/></svg></button>
    <button class="slot" aria-label="Zkosit"><svg class="ico"><path d="M3.500 10.500v6h13v-13h-5"/><path d="M3.500 11l8-7.500" stroke="#2a7cc0"/></svg></button>
    <button class="slot" aria-label="Zaoblit"><svg class="ico"><path d="M3.500 13v3.500h13v-13H14"/><path d="M3.500 13c0-6 4-9.500 10.500-9.500" stroke="#2a7cc0"/></svg></button>
    <button class="slot" aria-label="Prolnout"><svg class="ico"><path d="M3 16c1-2 1-4 1-6M16 9c0-2 0-4 1-6" stroke-width="2"/><path d="M4 10c3-7 5-4 6 0s4 4 6 0" stroke="#2a7cc0"/></svg></button>
    <button class="slot" aria-label="Rozložit"><svg class="ico"><g stroke="#1d629e"><path d="M6.500 9.500h6v6h-6zM6.500 9.500l2-2h6l-2 2M14.500 8v5l-2 2" fill="#cfe6f8"/><path d="M3 8l4-3v3l-2 5-2-1zM9 4.500l5-1v3l-5 1zM15.500 7l2-2v7l-2 2z" fill="#4c9ad6"/></g></svg></button>
  </div>
</main>

<section class="cmd d-flex flex-shrink-0">
  <div class="cmdside d-flex flex-column align-items-center justify-content-between pb-1 flex-shrink-0">
    <div class="grip h w-75 mt-1"></div>
    <button aria-label="Zavřít"><svg width="10" height="10"><path d="M1 1l7 7M8 1l-7 7" stroke="#fff" stroke-width="2"/></svg></button>
    <button aria-label="Přizpůsobit"><svg width="14" height="14"><path d="M5 5l7 7" stroke="#fff" stroke-width="3"/><path d="M2 4a3 3 0 1 0 2-2l1 3" fill="none" stroke="#fff" stroke-width="2"/></svg></button>
  </div>
  <div class="flex-grow-1">
    <div class="cmdlog">Vyberte druhou úsečku nebo Shift-výběr pro použití rohu nebo [Vzdálenost/úheL/Metoda]:</div>
    <div class="cmdline d-flex align-items-center ps-1">
      <svg class="prompt" viewBox="0 0 12 10"><path d="M2 2l3 3-3 3M6 8.500h4" fill="none" stroke="#333"/></svg><button class="drop tiny text-secondary" aria-label="Poslední příkazy"></button>
      <input class="cmdinput flex-grow-1" type="text" placeholder="Zadejte příkaz" aria-label="Příkaz">
    </div>
  </div>
</section>

<footer class="status d-flex align-items-center flex-shrink-0">
  <div class="coords flex-shrink-0">-47.2974,&nbsp; 86.3626 , 0.0000</div>
  <button class="stb" aria-label="Odvození vazeb"><svg class="ico"><path d="M2 7.500h9M6.500 3v9M5.500 6.500h2v2h-2z"/><path d="M9 14.500h3M12.500 16V9.500h3v3h-3" stroke="#eee"/></svg></button>
  <button class="stb" aria-label="Krok"><svg class="ico"><path d="M4 5h8M4 8h8M4 11h8" stroke-dasharray="1 2"/><path d="M4 13.500h10M13.500 5v9" stroke-dasharray="2 1"/></svg></button>
  <button class="stb" aria-label="Rastr"><svg class="ico"><path d="M2.500 2.500h13v13h-13z" fill="#eee"/><path d="M5.500 3v12M8.500 3v12M11.500 3v12M3 5.500h12M3 8.500h12M3 11.500h12"/></svg></button>
  <button class="stb" aria-label="Orto"><svg class="ico"><path d="M3.500 2v12.500H16M4 10.500h4v4" stroke="#444"/></svg></button>
  <button class="stb on" aria-label="Polární"><svg class="ico"><path d="M11 5.500a5 4 0 1 0 2 5H8l5-5"/></svg></button>
  <button class="stb on" aria-label="Uchop"><svg class="ico"><path d="M4.500 4.500h10v10h-10z" fill="#eef6fa"/><path d="M2.500 2.500h4v4h-4z" stroke="#e06a20"/></svg></button>
  <button class="stb on" aria-label="3D uchop"><svg class="ico"><path d="M4.500 5.500l3-3h7v7l-3 4h-7z" fill="#eef6fa"/><circle cx="4" cy="13" r="2" stroke="#e06a20"/></svg></button>
  <button class="stb on" aria-label="Trasování"><svg class="ico"><path d="M12 4L4 12.500h10" stroke-width="1.500"/></svg></button>
  <button class="stb on" aria-label="DUSS"><svg class="ico"><path d="M3.500 2v12.500H16M4 14l8-7" stroke="#1d5f94"/><path d="M12 2l1 2 3 1-2 2-1 3-2-3-2-1 2-1z" fill="#f5b020" stroke="#c9820e"/></svg></button>
  <button class="stb" aria-label="Dynamické zadání"><svg class="ico"><path d="M3 7.500h8M6.500 4v8"/><path d="M9.500 9.500h5v3h-5z" fill="#eee"/></svg></button>
  <button class="stb" aria-label="Tloušťka"><svg class="ico"><path d="M3 9h11" stroke-width="2"/><path d="M8.500 4v10"/></svg></button>
  <button class="stb on" aria-label="Průhlednost"><svg class="ico"><path d="M2.500 2.500h13v13h-13z" fill="#e4f3fc" stroke="#2a7cc0"/><path d="M4 5h10M4 9h10M4 13h10" stroke="#6fb2e0" stroke-width="2" stroke-dasharray="2 2"/><path d="M4 7h10M4 11h10" stroke="#6fb2e0" stroke-width="2" stroke-dasharray="2 2" stroke-dashoffset="2"/></svg></button>
  <button class="stb" aria-label="Rychlé vlastnosti"><svg class="ico"><path d="M5.500 4.500h6v9h-6z" fill="#ddd"/><path d="M7 7h4M7 9.500h4M7 12h4" stroke-dasharray="1 1"/></svg></button>
  <button class="stb" aria-label="Cyklus výběru"><svg class="ico"><path d="M2 4.500h6M4.500 2v6"/><path d="M6.500 6.500h6v6h-6z" fill="#eee" stroke="#555"/><path d="M9.500 9.500h5v5h-5z" fill="#5aa83a" stroke="#2f6b1c"/></svg></button>
  <button class="stb" aria-label="Monitor poznámek"><svg class="ico"><path d="M7 2.500h4v4.500h4.500v4H11v4.500H7V11H2.500V7H7z" fill="#fff" stroke="#555"/></svg></button>
  <div class="flex-grow-1"></div>
  <button class="stb w-auto px-0">MODELP</button>
  <button class="stb" aria-label="Rychlý pohled na rozvržení"><svg class="ico"><path d="M3.500 3.500h10v8h-10z" fill="#eee"/><path d="M6.500 5v4.500h4zM3 14.500h12"/></svg></button>
  <button class="stb" aria-label="Rychlý pohled na výkresy"><svg class="ico"><path d="M2.500 3.500h6v5h-6zM9.500 3.500h6v5h-6z" fill="#eee"/><path d="M3 12.500h12" stroke-width="3" stroke="#555"/></svg></button>
  <div class="gap12"></div>
  <button class="stb w-auto" aria-label="Měřítko poznámek"><svg class="ico"><use href="#scale"/></svg>1:1<span class="drop h-auto"></span></button>
  <button class="stb" aria-label="Viditelnost poznámek"><svg class="ico"><use href="#scale"/><circle cx="13" cy="12" r="2.500" fill="#ffd65a" stroke="#c48a1a"/></svg></button>
  <button class="stb" aria-label="Automatické měřítko"><svg class="ico" opacity=".5"><use href="#scale"/><path d="M13 3l-3 5h3l-2 4"/></svg></button>
  <div class="gap5"></div>
  <button class="stb" aria-label="Přepnout prostor"><svg class="ico"><use href="#gear"/></svg></button>
  <button class="stb" aria-label="Uzamknout"><svg class="ico"><path d="M2.500 8.500h8v5h-8z" fill="#eee"/><path d="M9.500 8V5.500c0-3 5-3 5 0V8"/></svg></button>
  <button class="stb" aria-label="Hardwarová akcelerace"><svg class="ico"><path d="M2.500 4.500h12v5h-12z" fill="#7c9cc8"/><circle cx="13" cy="11" r="2.500" fill="#ffd65a" stroke="#c48a1a"/></svg></button>
  <div class="gap5"></div>
  <div class="tray d-flex align-items-center flex-shrink-0">
    <svg class="ico"><path d="M4.500 4.500h9v7h-9z" fill="#3f7fc4" stroke="#1b4378"/><path d="M6 4h5v3H6z" fill="#ffd65a"/><path d="M8 12l3 2 5-6" stroke="#4aa82c" stroke-width="2"/></svg>
    <svg class="ico"><use href="#bulb"/></svg>
  </div>
  <button class="stb thin drop" aria-label="Nabídka stavového řádku"></button>
  <button class="stb" aria-label="Vyčistit obrazovku"><svg class="ico"><path d="M3.500 3.500h11v11h-11z" fill="#f4f4f4"/><path d="M3 4.500h12" stroke-width="2" stroke="#666"/></svg></button>
  <svg width="16" height="18"><path d="M10 6h2M6 10h2M10 10h2M2 14h2M6 14h2M10 14h2" stroke="#e8e8e8" stroke-width="2"/></svg>
</footer>
</body>
</html>
